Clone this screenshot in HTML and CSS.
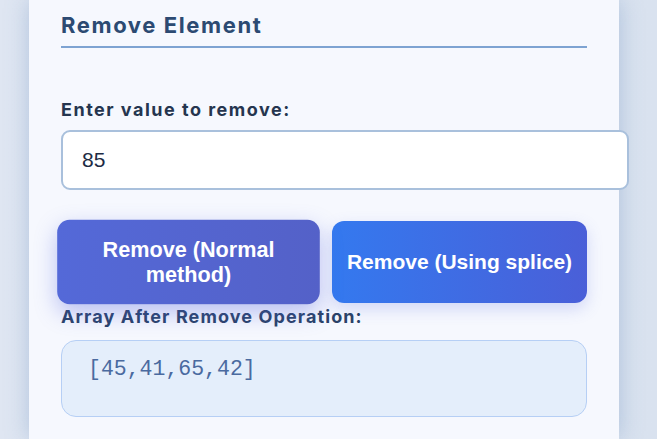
FILE: index.html
```html
<!DOCTYPE html>
<html lang="en">
<head>
<meta charset="utf-8">
<title>Remove Element</title>
<link rel="stylesheet" href="styles.css">
</head>
<body>
<div class="page">
  <section class="panel">
    <h2 class="title">Remove Element</h2>
    <label class="label" for="val">Enter value to remove:</label>
    <input class="field" id="val" type="text" value="85">
    <div class="actions">
      <button class="btn btn-normal">Remove (Normal method)</button>
      <button class="btn btn-splice">Remove (Using splice)</button>
    </div>
    <div class="result-label">Array After Remove Operation:</div>
    <div class="result">[45,41,65,42]</div>
  </section>
</div>
</body>
</html>
```
FILE: styles.css
```css
html, body {
  margin: 0;
  padding: 0;
}
body {
  width: 657px;
  height: 439px;
  overflow: hidden;
  background: linear-gradient(90deg, #dfe6f2 0%, #d9e2ef 100%);
  font-family: "Inter", "Liberation Sans", sans-serif;
}
.page {
  padding-left: 29px;
  height: 439px;
}
.panel {
  width: 526px;
  height: 439px;
  box-sizing: content-box;
  padding: 0 32px;
  background: #f6f8fe;
  box-shadow: 0 0 22px rgba(90, 130, 180, 0.35);
}
.title {
  margin: 0;
  padding-top: 11px;
  font-size: 22px;
  font-weight: 700;
  letter-spacing: 1.6px;
  color: #2c4a72;
  line-height: 28px;
  padding-bottom: 7px;
  border-bottom: 2px solid #7ea3d2;
}
.label {
  display: block;
  margin-top: 51px;
  font-size: 18px;
  font-weight: 700;
  letter-spacing: 1.5px;
  color: #25354f;
  line-height: 22px;
}
.field {
  display: block;
  width: 100%;
  box-sizing: content-box;
  margin-top: 9px;
  height: 56px;
  padding: 0 19px;
  border: 2px solid #a9c0dc;
  border-radius: 9px;
  background: #fff;
  font-family: "Liberation Sans", Arial, sans-serif;
  font-size: 21px;
  color: #1d2b44;
  outline: none;
}
.actions {
  display: flex;
  gap: 16px;
  margin-top: 31px;
}
.btn {
  flex: 1;
  border: 0;
  border-radius: 12px;
  padding: 17px 12px;
  font-family: "Liberation Sans", Arial, sans-serif;
  font-weight: 700;
  font-size: 21px;
  line-height: 24px;
  color: #fff;
  box-shadow: 0 6px 16px rgba(84, 100, 220, 0.22);
}
.btn-normal {
  background: linear-gradient(90deg, #5469d8 0%, #5461c8 100%);
  transform: scale(1.03);
  box-shadow: 0 8px 22px rgba(84, 100, 220, 0.38);
}
.btn-splice {
  background: linear-gradient(90deg, #3479ef 0%, #4a5fd8 100%);
}
.result-label {
  margin-top: 3px;
  font-size: 18px;
  font-weight: 700;
  letter-spacing: 1.1px;
  color: #2a4268;
  line-height: 22px;
}
.result {
  margin-top: 12px;
  height: 77px;
  box-sizing: border-box;
  padding: 14px 26px;
  background: #e4eefb;
  border: 1px solid #b6cff5;
  border-radius: 15px;
  font-family: "Liberation Mono", "Courier New", monospace;
  font-size: 21.5px;
  line-height: 28px;
  color: #4a6aa0;
}
```
